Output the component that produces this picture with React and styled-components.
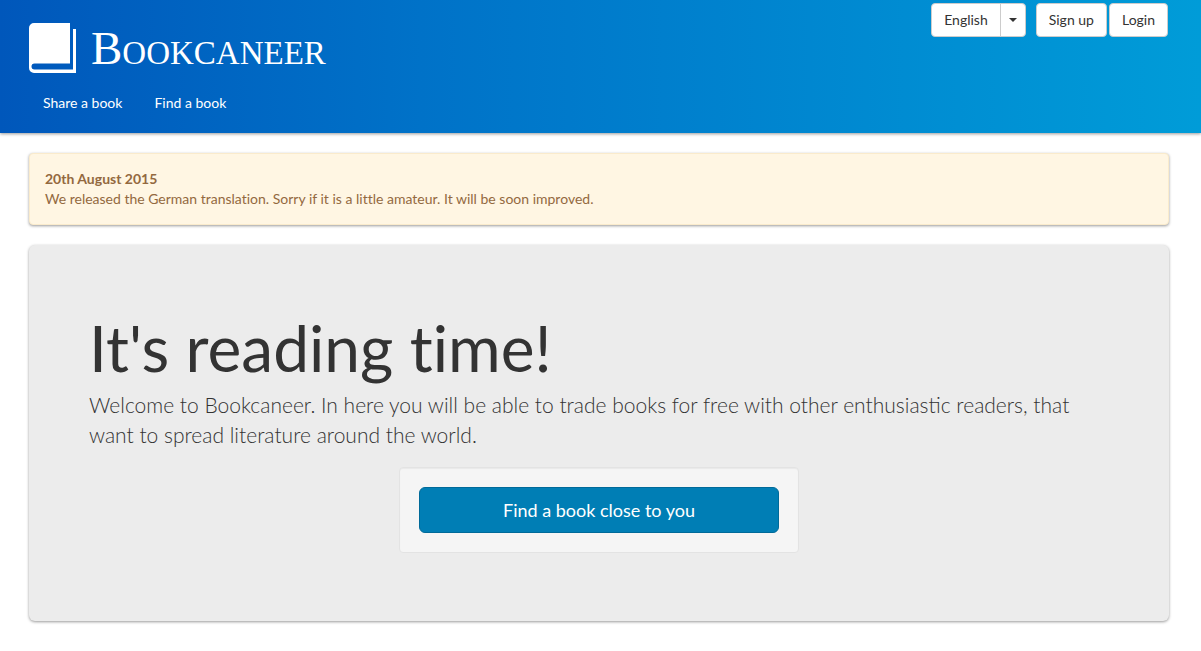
import React from "react";
import styled, { createGlobalStyle } from "styled-components";

const GlobalStyle = createGlobalStyle`
  *, *::before, *::after { box-sizing: border-box; }
  body {
    margin: 0;
    background: #fff;
    color: #333;
    font-family: Lato, "Open Sans", sans-serif;
    font-size: 14px;
    line-height: 20px;
    font-variant-ligatures: none;
  }
`;

const Header = styled.header`
  display: flex;
  justify-content: space-between;
  align-items: flex-start;
  min-height: 133px;
  padding: 3px 33px 0 29px;
  background: linear-gradient(to right, #0057bb, #0072c8 35%, #009cd8);
  box-shadow: 0 1px 3px rgba(0, 0, 0, 0.4);
`;

const Brand = styled.a`
  display: flex;
  align-items: center;
  gap: 15px;
  height: 50px;
  margin-top: 20px;
  color: #fff;
  text-decoration: none;
`;

const BrandName = styled.span`
  font-family: "Liberation Serif", serif;
  font-size: 47px;
  line-height: 50px;
  font-variant-caps: small-caps;
`;

const Nav = styled.nav`
  display: flex;
  gap: 32px;
  padding: 20px 14px;
`;

const NavLink = styled.a`
  color: #fff;
  text-decoration: none;
`;

const Actions = styled.div`
  display: flex;
  gap: 2px;
`;

const ButtonGroup = styled.div`
  display: flex;
  margin-right: 8px;
`;

const Button = styled.button`
  height: 34px;
  padding: 6px 12px;
  border: 1px solid #ccc;
  border-radius: 4px;
  background: #fff;
  color: #333;
  font: inherit;
  cursor: pointer;
`;

const LanguageButton = styled(Button)`
  border-radius: 4px 0 0 4px;
`;

const CaretButton = styled(Button)`
  display: flex;
  align-items: center;
  margin-left: -1px;
  padding: 6px 8px;
  border-radius: 0 4px 4px 0;
`;

const Caret = styled.span`
  border-top: 4px solid #333;
  border-right: 4px solid transparent;
  border-left: 4px solid transparent;
`;

const Main = styled.main`
  display: flex;
  flex-direction: column;
  gap: 20px;
  padding: 20px 32px 30px 29px;
`;

const Notice = styled.section`
  padding: 15px;
  border: 1px solid #faebcc;
  border-radius: 4px;
  background: #fff6e3;
  color: #93693f;
  box-shadow: 0 1px 3px rgba(0, 0, 0, 0.4);
`;

const NoticeText = styled.p`
  margin: 0;
`;

const Hero = styled.section`
  padding: 68px 60px;
  border-radius: 6px;
  background: #ececec;
  box-shadow: 0 1px 3px rgba(0, 0, 0, 0.4);
`;

const Title = styled.h1`
  margin: 0 0 7px;
  font-size: 64px;
  font-weight: 400;
  line-height: 70px;
`;

const Lead = styled.p`
  margin: 0 0 17px;
  font-size: 21px;
  font-weight: 300;
  line-height: 30px;
  font-variant-ligatures: normal;
`;

const Well = styled.div`
  max-width: 400px;
  margin: 0 auto;
  padding: 19px;
  border: 1px solid #e3e3e3;
  border-radius: 4px;
  background: #f5f5f5;
  box-shadow: inset 0 1px 1px rgba(0, 0, 0, 0.05);
`;

const PrimaryButton = styled.button`
  width: 100%;
  height: 46px;
  border: 1px solid #006a99;
  border-radius: 6px;
  background: #007eb5;
  color: #fff;
  font: inherit;
  font-size: 18px;
  cursor: pointer;
`;

function BookIcon() {
  return (
    <svg width="47" height="50" viewBox="0 0 47 50" fill="#fff" aria-hidden="true">
      <path d="M5 0H41V40.5H5.5A3 3 0 0 0 5.5 46.5H44V6H47V50H5A5 5 0 0 1 0 45V5A5 5 0 0 1 5 0Z" />
    </svg>
  );
}

export default function App() {
  return (
    <>
      <GlobalStyle />
      <Header>
        <div>
          <Brand href="#">
            <BookIcon />
            <BrandName>Bookcaneer</BrandName>
          </Brand>
          <Nav>
            <NavLink href="#share">Share a book</NavLink>
            <NavLink href="#find">Find a book</NavLink>
          </Nav>
        </div>
        <Actions>
          <ButtonGroup>
            <LanguageButton type="button">English</LanguageButton>
            <CaretButton type="button" aria-label="Choose language">
              <Caret />
            </CaretButton>
          </ButtonGroup>
          <Button type="button">Sign up</Button>
          <Button type="button">Login</Button>
        </Actions>
      </Header>
      <Main>
        <Notice>
          <NoticeText>
            <strong>20th August 2015</strong>
          </NoticeText>
          <NoticeText>
            We released the German translation. Sorry if it is a little amateur. It will be soon improved.
          </NoticeText>
        </Notice>
        <Hero>
          <Title>It's reading time!</Title>
          <Lead>
            Welcome to Bookcaneer. In here you will be able to trade books for free with other enthusiastic
            readers, that want to spread literature around the world.
          </Lead>
          <Well>
            <PrimaryButton type="button">Find a book close to you</PrimaryButton>
          </Well>
        </Hero>
      </Main>
    </>
  );
}
